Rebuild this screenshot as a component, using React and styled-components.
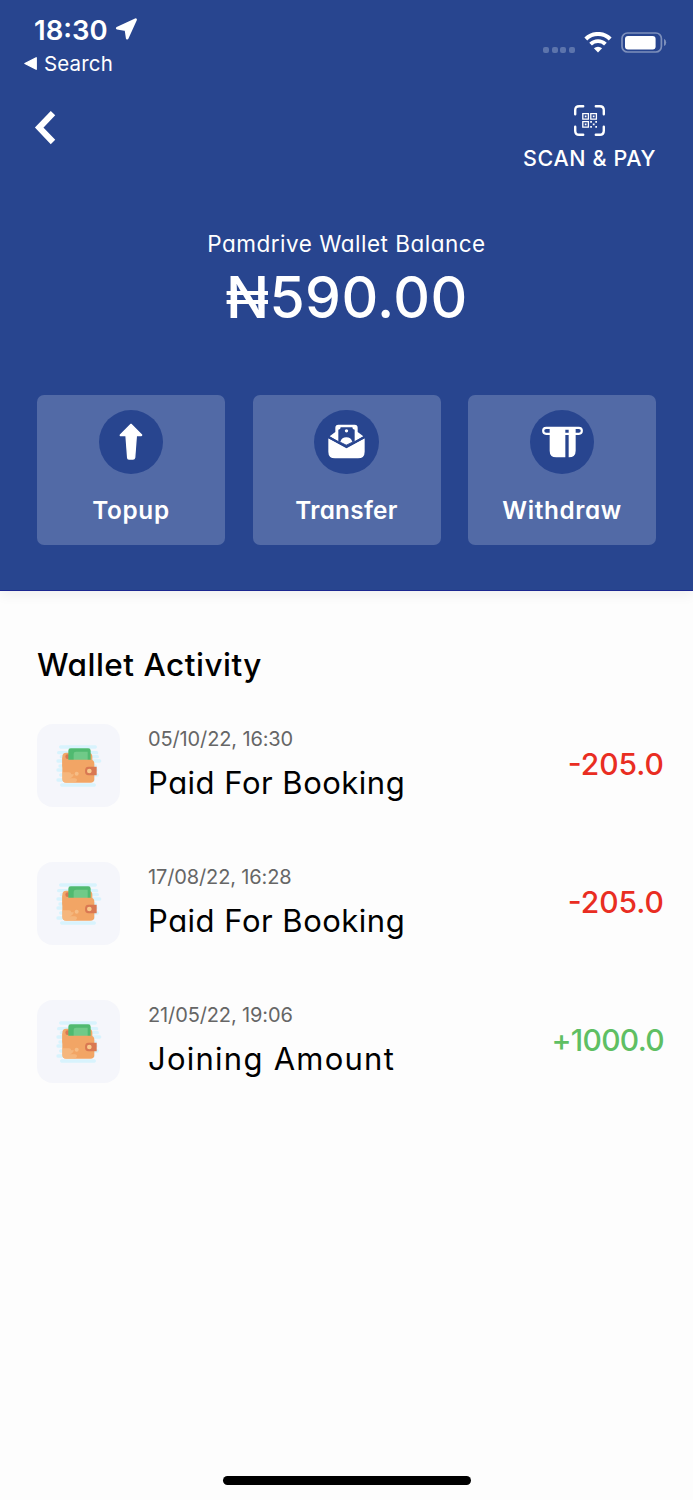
import styled, { createGlobalStyle } from 'styled-components';

const activities = [
    { id: 1, date: "05/10/22, 16:30", title: "Paid For Booking", amount: "-205.0" },
    { id: 2, date: "17/08/22, 16:28", title: "Paid For Booking", amount: "-205.0" },
    { id: 3, date: "21/05/22, 19:06", title: "Joining Amount", amount: "+1000.0", credit: true, spacing: 1.25 },
];

const LocationIcon = () => (
    <svg width="23" height="23" viewBox="0 0 23 23">
        <path d="M20.6 1.6 L12.2 20.2 L10.9 11.6 L2.2 10.2 Z" fill="#fff" stroke="#fff" strokeWidth="2.6" strokeLinejoin="round" />
    </svg>
);

const TriangleIcon = () => (
    <svg width="13" height="13" viewBox="0 0 13 13">
        <path d="M12.2 0.8 V12.2 L0.9 6.5 Z" fill="#fff" stroke="#fff" strokeWidth="1.4" strokeLinejoin="round" />
    </svg>
);

const WifiIcon = () => (
    <svg width="28" height="21" viewBox="0 0 28 21">
        <path d="M1.8 7 A17.2 17.2 0 0 1 26.2 7" fill="none" stroke="#fff" strokeWidth="4" />
        <path d="M6.6 12.1 A10.6 10.6 0 0 1 21.4 12.1" fill="none" stroke="#fff" strokeWidth="3.8" />
        <path d="M14 20.4 L9.9 16.3 A6 6 0 0 1 18.1 16.3 Z" fill="#fff" />
    </svg>
);

const BatteryIcon = () => (
    <svg width="46" height="21" viewBox="0 0 46 21">
        <rect x="1" y="1" width="39.4" height="19" rx="5.5" fill="none" stroke="#7e90bc" strokeWidth="1.7" />
        <rect x="4" y="4" width="30.6" height="13.4" rx="3" fill="#fff" />
        <path d="M43 6.7 Q45.2 7.8 45.2 10.4 Q45.2 13 43 14.1 Z" fill="#7e90bc" />
    </svg>
);

const BackIcon = () => (
    <svg width="23" height="36" viewBox="0 0 23 36">
        <path d="M19 3.2 L5.2 17.6 L19 32" fill="none" stroke="#fff" strokeWidth="6.2" strokeLinejoin="miter" />
    </svg>
);

const ScanIcon = () => (
    <svg width="31" height="31" viewBox="0 0 31 31" fill="none" stroke="#fff">
        <path d="M1.2 9.2 V5.2 Q1.2 1.2 5.2 1.2 H9.2 M21.8 1.2 H25.8 Q29.8 1.2 29.8 5.2 V9.2 M29.8 21.8 V25.8 Q29.8 29.8 25.8 29.8 H21.8 M9.2 29.8 H5.2 Q1.2 29.8 1.2 25.8 V21.8" strokeWidth="2.4" strokeLinecap="round" />
        <path d="M8.8 8.6 h5.6 v5.6 h-5.6 Z M16.8 8.6 h5.6 v5.6 h-5.6 Z M8.8 16.6 h5.6 v5.6 h-5.6 Z" strokeWidth="1.3" />
        <path d="M10.8 10.6 h1.7 v1.7 h-1.7 Z M18.8 10.6 h1.7 v1.7 h-1.7 Z M10.8 18.6 h1.7 v1.7 h-1.7 Z M16.2 16 h1.7 v1.7 h-1.7 Z M21.3 16 h1.7 v1.7 h-1.7 Z M18.8 18.5 h1.8 v1.8 h-1.8 Z M16.2 21.1 h1.7 v1.7 h-1.7 Z M21.3 21.1 h1.7 v1.7 h-1.7 Z" fill="#fff" stroke="none" />
    </svg>
);

const TopupIcon = () => (
    <svg width="24" height="37" viewBox="0 0 72 111">
        <path d="M36 4 L68 36 Q68 38 66 38 H52 L47 104 Q46 108 42 108 H30 Q26 108 26 104 L21 38 H6 Q3 38 4 36 Z" fill="#fff" stroke="#fff" strokeWidth="4" strokeLinejoin="round" />
    </svg>
);

const TransferIcon = () => (
    <svg width="37" height="35" viewBox="0 0 111 105">
        <path d="M22 11 Q22 2 31 2 H80 Q89 2 89 11 V24 L106 37 L84 50 L55 65 L27 50 L5 37 L22 24 Z" fill="#fff" />
        <path d="M38 10 H73 Q73 17 80 17 V52 L55 65 L31 52 V17 Q38 17 38 10 Z" fill="#28458f" />
        <circle cx="55.5" cy="20.5" r="5" fill="#fff" />
        <path d="M37 53 A19 19 0 0 1 73 53 L55 62 Z" fill="#fff" />
        <path d="M1 43 L55.5 73 L110 43 V83 Q110 103 90 103 H21 Q1 103 1 83 Z" fill="#fff" />
        <path d="M1 39 L55.5 68 L110 39" fill="none" stroke="#28458f" strokeWidth="6" />
    </svg>
);

const WithdrawIcon = () => (
    <svg width="41" height="32" viewBox="0 0 123 96">
        <rect x="3.5" y="5.5" width="116" height="18" rx="9" fill="none" stroke="#fff" strokeWidth="6.5" />
        <path d="M23 4 H101 V74 Q101 94 80 94 V11 H70 V94 H43 Q23 94 23 74 Z" fill="#fff" />
    </svg>
);

const WalletIcon = () => (
    <svg width="46" height="44" viewBox="0 0 138 132">
        <path d="M14 9 H118 M8 26 H122 M16 38 H124 M6 51 H131 M12 66 H118 M6 78 H120 M14 93 H124 M6 108 H112 M17 123 H115" stroke="#d8f3fd" strokeWidth="10" strokeLinecap="round" />
        <rect x="19" y="26" width="90" height="50" rx="12" fill="#f1a768" />
        <circle cx="35" cy="38" r="7" fill="#d97852" />
        <path d="M37 52 V20 Q37 13 44 13 H97 Q104 13 104 20 V52 Z" fill="#50ba70" />
        <path d="M53 52 V30 Q53 23 60 23 H95 V52 Z" fill="#70ca88" />
        <path d="M19 38 Q21 47 33 47 H103 Q115 47 115 59 V104 Q115 116 103 116 H31 Q19 116 19 104 Z" fill="#f2a565" />
        <path d="M19 85 H39 Q46 85 46 91 H54 Q48 104 39 103 H56 Q65 104 62 111 Q60 116 49 116 H31 Q19 116 19 104 Z" fill="#f6bd86" opacity="0.7" />
        <circle cx="62" cy="89" r="6" fill="#f6bd86" />
        <path d="M97 68 H122 V94 H97 Q87 94 87 81 Q87 68 97 68 Z" fill="#d97852" />
        <circle cx="100" cy="81" r="7" fill="#f9ca8d" />
    </svg>
);

const actions = [
    { label: "Topup", icon: <TopupIcon />, spacing: 0.7 },
    { label: "Transfer", icon: <TransferIcon />, spacing: 0.3 },
    { label: "Withdraw", icon: <WithdrawIcon />, spacing: 0.6 },
];

const ActivityRow = ({ date = "", title = "", amount = "", credit = false, spacing = 0.5 }) => {
    return (
        <RowWrapper>
            <IconTile><WalletIcon /></IconTile>
            <RowContent>
                <DateText>{ date }</DateText>
                <TitleText $spacing={spacing}>{ title }</TitleText>
            </RowContent>
            <AmountText $credit={credit}>{ amount }</AmountText>
        </RowWrapper>
    )
}

const App = () => {
    return (
        <Screen>
            <GlobalStyle />
            <Header>
                <StatusBar>
                    <div>
                        <Clock>18:30<LocationIcon /></Clock>
                        <BackToApp><TriangleIcon />Search</BackToApp>
                    </div>
                    <StatusRight>
                        <SignalDots><Dot /><Dot /><Dot /><Dot /></SignalDots>
                        <WifiIcon />
                        <BatteryIcon />
                    </StatusRight>
                </StatusBar>
                <NavBar>
                    <BackButton><BackIcon /></BackButton>
                    <ScanButton>
                        <ScanIcon />
                        <ScanLabel>SCAN &amp; PAY</ScanLabel>
                    </ScanButton>
                </NavBar>
                <BalanceLabel>Pamdrive Wallet Balance</BalanceLabel>
                <Balance>₦590.00</Balance>
                <Actions>
                    {actions.map(action => (
                        <ActionCard key={action.label}>
                            <ActionCircle>{action.icon}</ActionCircle>
                            <ActionLabel $spacing={action.spacing}>{action.label}</ActionLabel>
                        </ActionCard>
                    ))}
                </Actions>
            </Header>
            <Activity>
                <SectionTitle>Wallet Activity</SectionTitle>
                {activities.map(item => <ActivityRow key={item.id} {...item} />)}
            </Activity>
            <HomeIndicator />
        </Screen>
    )
}

const GlobalStyle = createGlobalStyle`
    * {
        box-sizing: border-box;
    }

    body {
        margin: 0;
        background: #fdfdfd;
        font-family: Inter, "Open Sans", sans-serif;
        font-feature-settings: "cv11";
    }

    svg {
        display: block;
        flex-shrink: 0;
    }
`;

const Screen = styled.div`
    display: flex;
    flex-direction: column;
    width: 693px;
    height: 1500px;
    overflow: hidden;
`;

const Header = styled.header`
    height: 591px;
    flex-shrink: 0;
    color: #fff;
    background: #28458f;
    border-bottom: 1px solid #1b2790;
    box-shadow: 0 4px 12px rgba(0, 0, 0, 0.06);
`;

const StatusBar = styled.div`
    display: flex;
    justify-content: space-between;
    height: 84px;
    padding: 13px 26px 0 24px;
`;

const Clock = styled.div`
    display: flex;
    align-items: center;
    gap: 7px;
    height: 33px;
    padding-left: 10px;
    font-size: 27.5px;
    font-weight: 600;
    font-feature-settings: normal;
`;

const BackToApp = styled.div`
    display: flex;
    align-items: center;
    gap: 7px;
    height: 34px;
    font-size: 20.5px;
    letter-spacing: 0.15px;
    font-feature-settings: normal;
`;

const StatusRight = styled.div`
    display: flex;
    align-items: flex-start;
    gap: 9px;
    padding-top: 19px;
`;

const SignalDots = styled.div`
    display: flex;
    gap: 2.7px;
    padding-top: 14.7px;
`;

const Dot = styled.div`
    width: 6px;
    height: 6px;
    border-radius: 2px;
    background: #5c74ac;
`;

const NavBar = styled.div`
    display: flex;
    justify-content: space-between;
    height: 146px;
    padding: 21px 37px 0 34px;
`;

const BackButton = styled.div`
    padding-top: 5px;
`;

const ScanButton = styled.div`
    display: flex;
    flex-direction: column;
    align-items: center;
`;

const ScanLabel = styled.div`
    margin-top: 7px;
    line-height: 30px;
    font-size: 21.5px;
    font-weight: 500;
    letter-spacing: 0.6px;
`;

const BalanceLabel = styled.div`
    line-height: 28px;
    text-align: center;
    font-size: 22.5px;
    letter-spacing: 0.5px;
`;

const Balance = styled.div`
    height: 80px;
    line-height: 80px;
    text-align: center;
    font-size: 57px;
    font-weight: 500;
    letter-spacing: 0.4px;
`;

const Actions = styled.div`
    display: grid;
    grid-template-columns: repeat(3, 188px);
    justify-content: space-between;
    padding: 0 37px;
    margin-top: 57px;
`;

const ActionCard = styled.div`
    display: flex;
    flex-direction: column;
    align-items: center;
    height: 150px;
    padding-top: 14.5px;
    border-radius: 7px;
    background: #526aa6;
`;

const ActionCircle = styled.div`
    display: flex;
    align-items: center;
    justify-content: center;
    width: 64.5px;
    height: 64.5px;
    border-radius: 50%;
    background: #28458f;
`;

const ActionLabel = styled.div`
    margin-top: 21px;
    line-height: 30px;
    font-size: 24.3px;
    font-weight: 600;
    letter-spacing: ${({ $spacing }) => $spacing}px;
`;

const Activity = styled.main`
    flex: 1;
    padding: 54px 29px 0 37px;
`;

const SectionTitle = styled.div`
    height: 79px;
    line-height: 40px;
    color: #000;
    font-size: 31.5px;
    font-weight: 500;
    letter-spacing: 0.5px;
`;

const RowWrapper = styled.div`
    display: flex;
    align-items: center;
    height: 83px;
    margin-bottom: 55px;
`;

const IconTile = styled.div`
    display: flex;
    align-items: center;
    justify-content: center;
    width: 83px;
    height: 83px;
    border-radius: 16px;
    background: #f5f6fb;
`;

const RowContent = styled.div`
    flex: 1;
    height: 83px;
    margin-left: 28px;
`;

const DateText = styled.div`
    height: 30px;
    line-height: 30px;
    color: #666;
    font-size: 20px;
    letter-spacing: -0.13px;
`;

const TitleText = styled.div`
    height: 40px;
    line-height: 40px;
    margin-top: 9px;
    color: #000;
    font-size: 31px;
    letter-spacing: ${({ $spacing }) => $spacing}px;
`;

const AmountText = styled.div`
    line-height: 40px;
    margin-bottom: 3px;
    color: ${({ $credit }) => $credit ? '#5fbf63' : '#e92d22'};
    font-size: 30px;
    font-weight: 500;
    letter-spacing: ${({ $credit }) => $credit ? '-0.7px' : '0'};
`;

const HomeIndicator = styled.div`
    width: 248px;
    height: 9px;
    margin: 0 auto 15px;
    flex-shrink: 0;
    border-radius: 5px;
    background: #000;
`;

export default App;
